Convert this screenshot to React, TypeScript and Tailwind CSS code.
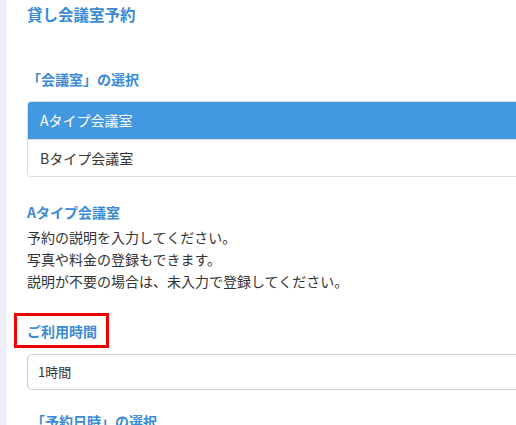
const rooms = ['Aタイプ会議室', 'Bタイプ会議室'];

const lines = [
  '予約の説明を入力してください。',
  '写真や料金の登録もできます。',
  '説明が不要の場合は、未入力で登録してください。',
];

export default function App() {
  return (
    <div
      className="w-[516px] h-[425px] overflow-hidden flex items-start bg-white text-[#333]"
      style={{ fontFamily: '"Noto Sans CJK JP", "Noto Sans", sans-serif' }}
    >
      {/* side strip */}
      <div className="w-[7px] h-full shrink-0 bg-[#eef2f8]" />

      {/* main */}
      <div className="pl-[20px] w-[580px] shrink-0 flex flex-col [&>*]:shrink-0">
        <div className="h-[30px] flex items-center text-[15.5px] font-bold text-[#3b8ad6]">
          貸し会議室予約
        </div>

        <div className="mt-[38px] h-[22px] flex items-center text-[14px] font-bold text-[#3b8ad6]">
          「会議室」の選択
        </div>

        <div className="mt-[11px] border border-[#ddd] rounded-[4px] overflow-hidden">
          {rooms.map((r, i) => (
            <div
              key={r}
              className={
                i === 0
                  ? 'h-[37px] flex items-center pl-[12px] text-[14px] bg-[#4299e1] text-white'
                  : 'h-[37px] flex items-center pl-[12px] text-[14px] border-t border-[#ddd] text-[#333]'
              }
            >
              {r}
            </div>
          ))}
        </div>

        <div className="mt-[24px] h-[22px] flex items-center text-[14px] font-bold text-[#3b8ad6]">
          Aタイプ会議室
        </div>
        <div className="mt-[3px] text-[14px]">
          {lines.map((l) => (
            <div key={l} className="h-[22px] flex items-center">
              {l}
            </div>
          ))}
        </div>

        <div className="mt-[21px] -ml-[13px] w-[95px] h-[35px] border-[3px] border-[#e00] flex items-center pl-[10px] pt-[2px] text-[14px] font-bold text-[#3b8ad6]">
          ご利用時間
        </div>

        <div className="mt-[6px] h-[36px] border border-[#ccc] rounded-[4px] flex items-center pl-[10px] text-[13px] text-[#333]">
          1時間
        </div>

        <div className="mt-[20px] h-[22px] pl-[4px] flex items-center text-[14px] font-bold text-[#3b8ad6]">
          「予約日時」の選択
        </div>
      </div>
    </div>
  );
}
